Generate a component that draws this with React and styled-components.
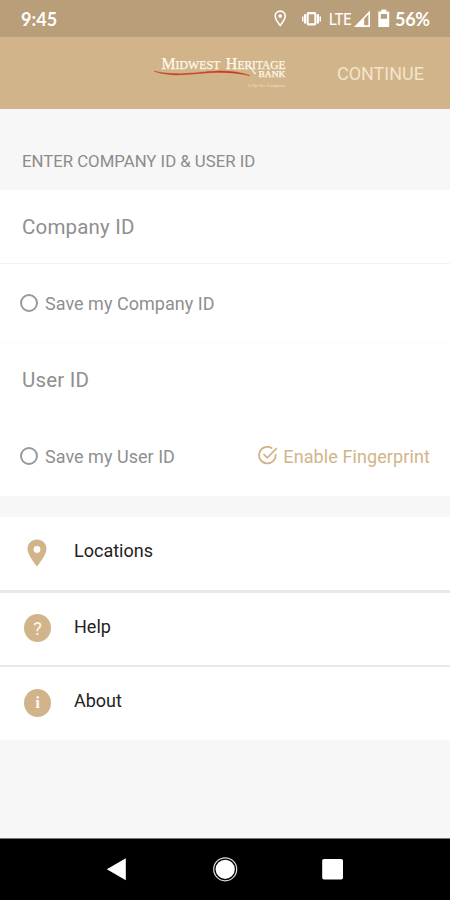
import React from "react";
import styled, { createGlobalStyle } from "styled-components";

const TAN = "#d2b48a";

const App = () => {
    return (
        <>
            <GlobalStyle />
            <Screen>
                <StatusBar>
                    <Clock>9:45</Clock>
                    <StatusIcons />
                    <Battery>56%</Battery>
                </StatusBar>
                <Header>
                    <Logo />
                    <ContinueBtn>CONTINUE</ContinueBtn>
                </Header>
                <SectionTitle>ENTER COMPANY ID &amp; USER ID</SectionTitle>
                <Form>
                    <Field $height={74} $line="#f3f3f3">Company ID</Field>
                    <OptionRow $height={79} $line="#fafafa">
                        <Option><Radio />Save my Company ID</Option>
                    </OptionRow>
                    <Field $height={73}>User ID</Field>
                    <OptionRow $height={80}>
                        <Option><Radio />Save my User ID</Option>
                        <Option $accent><CheckIcon />Enable Fingerprint</Option>
                    </OptionRow>
                </Form>
                <Menu>
                    <MenuItem $height={76} $line={3}>
                        <IconBox $nudge={2}><PinIcon /></IconBox>
                        <MenuLabel>Locations</MenuLabel>
                    </MenuItem>
                    <MenuItem $height={74} $line={2}>
                        <IconBox><Round>?</Round></IconBox>
                        <MenuLabel>Help</MenuLabel>
                    </MenuItem>
                    <MenuItem $height={73} $line={0}>
                        <IconBox><Round $serif>i</Round></IconBox>
                        <MenuLabel>About</MenuLabel>
                    </MenuItem>
                </Menu>
                <NavBar>
                    <NavIcons />
                </NavBar>
            </Screen>
        </>
    );
}

const StatusIcons = () => (
    <svg width="119" height="24" viewBox="271 7 119 24" fill="#fff">
        <path
            d="M280.2 11.1c-2.9 0-5 2.2-5 4.9 0 3.5 5 9.5 5 9.5s5-6 5-9.5c0-2.7-2.1-4.9-5-4.9z"
            fill="none" stroke="#fff" strokeWidth="1.6"
        />
        <circle cx="280.2" cy="16.1" r="1.9" />
        <rect x="307.6" y="13.2" width="7.8" height="11.2" rx="1" fill="none" stroke="#fff" strokeWidth="2.2" />
        <path d="M304 14.3h2v9.2h-2zM317 14.3h2v9.2h-2zM302 16.5h1.5v5H302zM319.5 16.5h1.5v5h-1.5z" />
        <text x="329" y="25.2" fontFamily="Roboto" fontSize="17" textLength="22.5" lengthAdjust="spacingAndGlyphs" stroke="#fff" strokeWidth="0.2">LTE</text>
        <path fillRule="evenodd" d="M354 27 370 10.5V27zM364.2 18.7V25.3h4.2v-10.9z" />
        <path fillRule="evenodd" d="M381.3 9.5h5v2h2.9V27h-10.9V11.5h3zM380.8 14v4.8h6.2V14z" />
    </svg>
);

const Logo = () => (
    <svg width="146" height="44" viewBox="152 51 146 44" fill="#fff8ec" fontFamily="Liberation Serif, serif">
        <g stroke="#fff8ec" strokeWidth="0.25">
            <text x="161.5" y="69.3" fontSize="17" textLength="14" lengthAdjust="spacingAndGlyphs">M</text>
            <text x="175.6" y="69.3" fontSize="13" textLength="44.7" lengthAdjust="spacingAndGlyphs">IDWEST</text>
            <text x="225.8" y="69.3" fontSize="16.5" textLength="11.5" lengthAdjust="spacingAndGlyphs">H</text>
            <text x="237.5" y="69.3" fontSize="13" textLength="48" lengthAdjust="spacingAndGlyphs">ERITAGE</text>
            <text x="258.5" y="77.2" fontSize="8.8" textLength="26.8" lengthAdjust="spacingAndGlyphs">BANK</text>
        </g>
        <path d="M249 66c2.6 1 3.3 5.6 6.8 8" fill="none" stroke="#fff8ec" strokeWidth="1.2" />
        <text x="247.5" y="86.5" fontSize="5" opacity="0.65" textLength="37.5" lengthAdjust="spacingAndGlyphs">A Hy-Vee Company</text>
        <path
            d="M154 71.2c9 3 18 4 27 3.6 14-.7 25-2.4 38-2.4 11 0 20 .7 31 3.2-10-3.6-20-4.8-31-4.6-14 .2-25 2.7-39 2.7-9 0-17-.7-26-2.5z"
            fill="#c93a20" stroke="#c93a20" strokeWidth="0.4"
        />
    </svg>
);

const CheckIcon = () => (
    <svg width="20" height="20" viewBox="0 0 20 20" fill="none" stroke={TAN} strokeWidth="1.8">
        <path d="M14.2 2.4A8.3 8.3 0 1 0 17.6 8" />
        <path d="M5.5 8.1 9.3 11.8 18.8 2.2" />
    </svg>
);

const PinIcon = () => (
    <svg width="20" height="28" viewBox="0 0 20 28" fill={TAN}>
        <path fillRule="evenodd" d="M10 .5C4.6.5.5 4.5.5 9.8.5 16.3 10 27.5 10 27.5s9.5-11.2 9.5-17.7C19.5 4.5 15.4.5 10 .5zM10 7a3.4 3.4 0 1 1 0 6.8A3.4 3.4 0 0 1 10 7z" />
    </svg>
);

const NavIcons = () => (
    <svg width="240" height="28" viewBox="106 855 240 28" fill="#fff">
        <path d="M106.8 869.2 125.8 858.3V880.2z" />
        <circle cx="225.2" cy="869.3" r="9.6" />
        <circle cx="225.2" cy="869.3" r="11.5" fill="none" stroke="#ddd" strokeWidth="1.2" />
        <rect x="322.2" y="859" width="20.8" height="20.5" rx="1.8" />
    </svg>
);

const GlobalStyle = createGlobalStyle`
    * {
        box-sizing: border-box;
    }
    body {
        margin: 0;
        font-family: Roboto, sans-serif;
    }
`;

const Screen = styled.div`
    display: flex;
    flex-direction: column;
    width: 450px;
    height: 900px;
    background: #f7f7f7;
    overflow: hidden;
`;

const StatusBar = styled.div`
    display: flex;
    align-items: center;
    height: 37px;
    padding: 1px 19px 0 21px;
    background: #b89e79;
    color: #fff;
    svg {
        display: block;
        margin-left: auto;
    }
`;

const Clock = styled.span`
    font-family: Lato, sans-serif;
    font-size: 18px;
    font-weight: 700;
    letter-spacing: 0.1px;
`;

const Battery = styled.span`
    width: 36px;
    margin-left: 5px;
    font-family: Lato, sans-serif;
    font-size: 18px;
    font-weight: 700;
    letter-spacing: -0.3px;
`;

const Header = styled.div`
    display: flex;
    align-items: center;
    justify-content: space-between;
    height: 72px;
    padding: 0 26px 0 152px;
    background: ${TAN};
`;

const ContinueBtn = styled.button`
    padding: 2px 0 0;
    border: none;
    background: none;
    color: #f3e4cb;
    font-family: Roboto, sans-serif;
    font-size: 18px;
    line-height: 22px;
`;

const SectionTitle = styled.div`
    height: 81px;
    padding: 42px 22px 0;
    color: #8c8c8c;
    font-size: 16.75px;
    line-height: 20px;
`;

const Form = styled.div`
    height: 306px;
    background: #fff;
`;

const Field = styled.div`
    display: flex;
    align-items: center;
    height: ${(props) => props.$height}px;
    padding: 1px 22px 0;
    border-bottom: ${(props) => (props.$line ? `1px solid ${props.$line}` : "none")};
    color: #8f8f8f;
    font-size: 20.5px;
    letter-spacing: 0.18px;
`;

const OptionRow = styled.div`
    display: flex;
    align-items: center;
    justify-content: space-between;
    height: ${(props) => props.$height}px;
    padding: 0 20px;
    border-bottom: ${(props) => (props.$line ? `1px solid ${props.$line}` : "none")};
`;

const Option = styled.div`
    display: flex;
    align-items: center;
    gap: ${(props) => (props.$accent ? 5 : 7)}px;
    color: ${(props) => (props.$accent ? TAN : "#8f8f8f")};
    font-size: 18px;
    letter-spacing: ${(props) => (props.$accent ? 0.1 : 0.03)}px;
`;

const Radio = styled.span`
    width: 18px;
    height: 18px;
    border: 2px solid #999;
    border-radius: 50%;
`;

const Menu = styled.div`
    margin-top: 21px;
    background: #fff;
`;

const MenuItem = styled.div`
    display: flex;
    align-items: center;
    height: ${(props) => props.$height}px;
    padding-left: 22px;
    border-bottom: ${(props) => props.$line}px solid #e9e9e9;
`;

const IconBox = styled.div`
    display: flex;
    justify-content: center;
    width: 31px;
    padding-right: ${(props) => props.$nudge || 0}px;
    padding-bottom: 2px;
`;

const Round = styled.span`
    display: flex;
    align-items: center;
    justify-content: center;
    width: 27px;
    height: 28px;
    border-radius: 50%;
    background: ${TAN};
    color: #fff8ee;
    font-family: ${(props) => (props.$serif ? '"Liberation Serif", serif' : "Roboto, sans-serif")};
    font-size: ${(props) => (props.$serif ? 17 : 18)}px;
    font-weight: ${(props) => (props.$serif ? 700 : 400)};
`;

const MenuLabel = styled.span`
    margin-left: 21px;
    padding-bottom: 6px;
    color: #222;
    font-size: 18px;
`;

const NavBar = styled.div`
    display: flex;
    height: 62px;
    margin-top: auto;
    padding: 16px 0 0 106px;
    border-top: 1px solid #777;
    background: #000;
`;

export default App;
